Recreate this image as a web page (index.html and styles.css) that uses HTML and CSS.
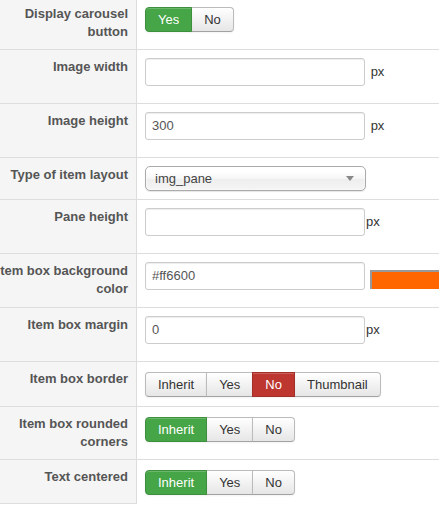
FILE: index.html
```html
<!DOCTYPE html>
<html lang="en">
<head>
    <meta charset="UTF-8">
    <meta name="viewport" content="width=device-width, initial-scale=1.0">
    <title>Carousel options</title>
    <link rel="stylesheet" href="styles.css">
</head>
<body>
    <table class="options">
        <tr>
            <th>Display carousel button</th>
            <td>
                <div class="btn-group">
                    <button class="btn btn-success">Yes</button>
                    <button class="btn">No</button>
                </div>
            </td>
        </tr>
        <tr>
            <th>Image width</th>
            <td><input type="text" value=""> <span class="unit">px</span></td>
        </tr>
        <tr>
            <th>Image height</th>
            <td><input type="text" value="300"> <span class="unit">px</span></td>
        </tr>
        <tr>
            <th>Type of item layout</th>
            <td>
                <div class="chosen">
                    <span>img_pane</span>
                    <b class="caret"></b>
                </div>
            </td>
        </tr>
        <tr>
            <th>Pane height</th>
            <td><input type="text" value=""><span class="unit unit-tight">px</span></td>
        </tr>
        <tr>
            <th>Item box background color</th>
            <td><input type="text" value="#ff6600"><span class="swatch" style="background-color: #ff6600;"></span></td>
        </tr>
        <tr>
            <th>Item box margin</th>
            <td><input type="text" value="0"><span class="unit unit-tight">px</span></td>
        </tr>
        <tr>
            <th>Item box border</th>
            <td>
                <div class="btn-group">
                    <button class="btn">Inherit</button>
                    <button class="btn">Yes</button>
                    <button class="btn btn-danger">No</button>
                    <button class="btn">Thumbnail</button>
                </div>
            </td>
        </tr>
        <tr>
            <th>Item box rounded corners</th>
            <td>
                <div class="btn-group">
                    <button class="btn btn-success">Inherit</button>
                    <button class="btn">Yes</button>
                    <button class="btn">No</button>
                </div>
            </td>
        </tr>
        <tr class="last">
            <th>Text centered</th>
            <td>
                <div class="btn-group">
                    <button class="btn btn-success">Inherit</button>
                    <button class="btn">Yes</button>
                    <button class="btn">No</button>
                </div>
            </td>
        </tr>
    </table>
</body>
</html>
```

FILE: styles.css
```css
/* Base */
* {
    box-sizing: content-box;
}

body {
    margin: 0;
    background-color: #fff;
    font-family: "Liberation Sans", Arial, sans-serif;
    font-size: 13px;
    line-height: 18px;
    color: #333;
    overflow: hidden;
}

/* Options table */
.options {
    border-collapse: separate;
    border-spacing: 0;
    margin: -4px 0 0 -20px;
    width: calc(100% + 20px);
}

.options th,
.options td {
    border-top: 1px solid #ddd;
    padding: 8px;
    vertical-align: top;
    text-align: left;
}

.options th {
    width: 140px;
    min-width: 140px;
    background-color: #f5f5f5;
    border-right: 1px solid #ddd;
    text-align: right;
    font-weight: bold;
    color: #555;
}

.options td {
    white-space: nowrap;
}

.options .last th {
    border-bottom: 1px solid #ddd;
}

/* Text fields */
input[type="text"] {
    display: inline-block;
    width: 206px;
    height: 18px;
    padding: 4px 6px;
    margin: 0 0 9px;
    font-family: inherit;
    font-size: 13px;
    line-height: 18px;
    color: #555;
    background-color: #fff;
    border: 1px solid #ccc;
    border-radius: 3px;
    box-shadow: inset 0 1px 1px rgba(0, 0, 0, 0.075);
    outline: none;
}

.unit {
    margin-left: 2px;
    color: #333;
}

.unit-tight {
    margin-left: 1px;
}

.swatch {
    display: inline-block;
    vertical-align: top;
    width: 80px;
    height: 17px;
    margin: 8px 0 0 5px;
    border-top: 2px solid #999;
    border-left: 2px solid #999;
}

/* Dropdown */
.chosen {
    display: inline-flex;
    align-items: center;
    justify-content: space-between;
    vertical-align: top;
    width: 199px;
    height: 23px;
    padding: 0 11px 0 9px;
    color: #444;
    border: 1px solid #aaa;
    border-radius: 5px;
    background: linear-gradient(#fff 20%, #f6f6f6 50%, #eee 52%, #f4f4f4 100%);
    box-shadow: inset 0 0 3px #fff, 0 1px 1px rgba(0, 0, 0, 0.1);
}

.caret {
    width: 0;
    height: 0;
    border-left: 4px solid transparent;
    border-right: 4px solid transparent;
    border-top: 5px solid #888;
}

/* Button groups */
.btn-group {
    display: inline-flex;
    vertical-align: top;
    margin: 2px 0 1px;
}

.btn {
    padding: 3px 12px;
    margin: 0;
    font-family: inherit;
    font-size: 13px;
    line-height: 17px;
    color: #333;
    background: linear-gradient(#fff, #e6e6e6);
    border: 1px solid #bbb;
    border-bottom-color: #a2a2a2;
    border-radius: 0;
    box-shadow: inset 0 1px 0 rgba(255, 255, 255, 0.2), 0 1px 2px rgba(0, 0, 0, 0.05);
    cursor: pointer;
}

.btn + .btn {
    margin-left: -1px;
}

.btn:first-child {
    border-radius: 4px 0 0 4px;
}

.btn:last-child {
    border-radius: 0 4px 4px 0;
}

.btn-success {
    color: #fff;
    background: #46a546;
    border-color: #3d8f3d;
    position: relative;
}

.btn-danger {
    color: #fff;
    background: #bd362f;
    border-color: #a22f29;
    position: relative;
}
```
